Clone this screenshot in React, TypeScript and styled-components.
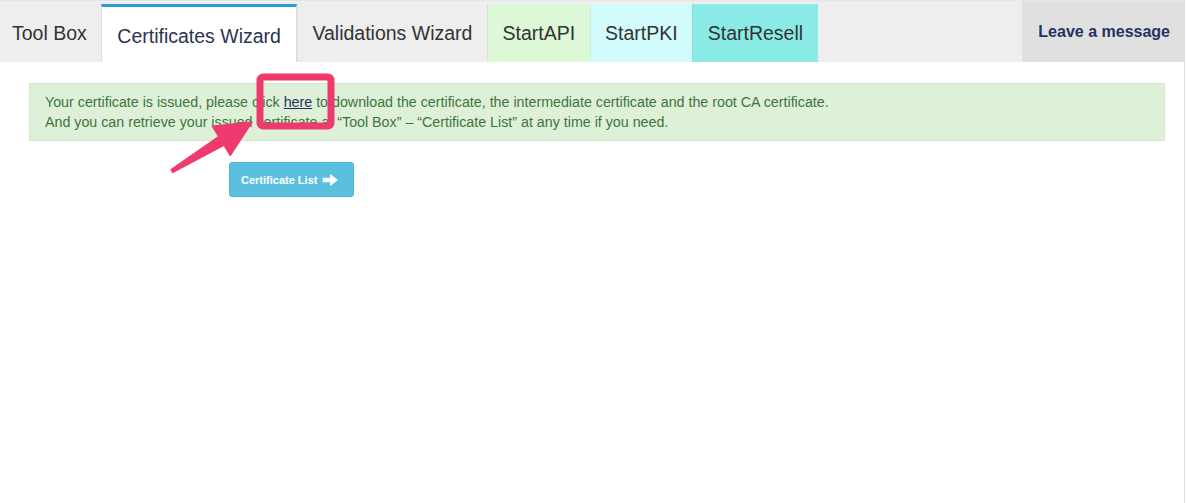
import React from "react";
import styled, { createGlobalStyle } from "styled-components";

const GlobalStyle = createGlobalStyle`
  html, body { margin: 0; padding: 0; background: #ffffff; }
  body { font-family: "Liberation Sans", Arial, sans-serif; }
  * { box-sizing: border-box; }
`;

const Page = styled.div`
  position: relative;
  width: 1185px;
  min-height: 503px;
  border-right: 1px solid #dcdcdc;
  background: #ffffff;
`;

const TabBar = styled.nav`
  display: flex;
  align-items: stretch;
  height: 62px;
  padding-top: 3px;
  background: #eeeeee;
  border-top: 1px solid #e6e6e6;
`;

type Variant = "plain" | "active" | "api" | "pki" | "resell";

const tabBg: Record<Variant, string> = {
  plain: "#eeeeee",
  active: "#ffffff",
  api: "#dcf8d6",
  pki: "#d2fbfb",
  resell: "#8aebe6",
};

const Tab = styled.div<{ $variant: Variant }>`
  display: flex;
  align-items: center;
  padding: ${(p) => (p.$variant === "active" ? "4px 15px 0" : "0 14.5px")};
  font-size: 19.5px;
  color: ${(p) => (p.$variant === "active" ? "#2b3452" : "#333333")};
  background: ${(p) => tabBg[p.$variant]};
  border-left: 1px solid
    ${(p) => (p.$variant === "active" ? "#dddddd" : "rgba(0,0,0,0.05)")};
  border-right: ${(p) => (p.$variant === "active" ? "1px solid #dddddd" : "0")};
  border-top: ${(p) => (p.$variant === "active" ? "3px solid #2b9cd4" : "0")};
  white-space: nowrap;
  cursor: pointer;
`;

const FirstTab = styled(Tab)`
  border-left: 0;
  padding-left: 12px;
`;

const Spacer = styled.div`
  flex: 1;
`;

const MessageButton = styled.div`
  display: flex;
  align-items: center;
  padding: 0 14px 0 16px;
  margin-top: -3px;
  background: #e0e0e0;
  color: #263163;
  font-weight: bold;
  font-size: 16px;
  white-space: nowrap;
`;

const Content = styled.main`
  padding: 21px 19px 0 29px;
`;

const Alert = styled.div`
  background: #dff0d8;
  border: 1px solid #d6e9c6;
  color: #3c763d;
  font-size: 14.25px;
  line-height: 20px;
  padding: 8px 15px;
  border-radius: 1px;
`;

const Link = styled.a`
  color: #27305a;
  text-decoration: underline;
  cursor: pointer;
`;

const ButtonRow = styled.div`
  display: flex;
  margin-top: 21px;
  padding-left: 200px;
`;

const InfoButton = styled.button`
  display: flex;
  align-items: center;
  gap: 5px;
  height: 35px;
  width: 125px;
  padding: 0 0 0 11px;
  background: #5bc0de;
  border: 1px solid #46b8da;
  border-radius: 3px;
  color: #ffffff;
  font-family: "Liberation Sans", Arial, sans-serif;
  font-size: 11px;
  font-weight: bold;
  cursor: pointer;
`;

const Overlay = styled.svg`
  position: absolute;
  left: 0;
  top: 0;
  pointer-events: none;
`;

const ArrowIcon = () => (
  <svg width="16" height="12" viewBox="0 0 16 12">
    <path d="M1 4.2 H8.5 V0.6 L15.4 6 L8.5 11.4 V7.8 H1 Z" fill="#ffffff" stroke="#ffffff" strokeWidth="0.8" strokeLinejoin="round" />
  </svg>
);

export default function App() {
  return (
    <>
      <GlobalStyle />
      <Page>
        <TabBar>
          <FirstTab $variant="plain">Tool Box</FirstTab>
          <Tab $variant="active">Certificates Wizard</Tab>
          <Tab $variant="plain">Validations Wizard</Tab>
          <Tab $variant="api">StartAPI</Tab>
          <Tab $variant="pki">StartPKI</Tab>
          <Tab $variant="resell">StartResell</Tab>
          <Spacer />
          <MessageButton>Leave a message</MessageButton>
        </TabBar>
        <Content>
          <Alert>
            Your certificate is issued, please click <Link>here</Link> to download the certificate, the intermediate certificate and the root CA certificate.
            <br />
            And you can retrieve your issued certificate at “Tool Box” – “Certificate List” at any time if you need.
          </Alert>
          <ButtonRow>
            <InfoButton>
              Certificate List <ArrowIcon />
            </InfoButton>
          </ButtonRow>
        </Content>
        <Overlay width="1187" height="503" viewBox="0 0 1187 503">
          <rect x="260" y="77" width="71" height="49" rx="3" fill="none" stroke="#ee3a6e" strokeWidth="7" />
          <polygon
            points="171.2,169.7 218.8,136.5 212.5,126.3 252,122 230.3,155.3 224,145 172.8,172.3"
            fill="#ee3a6e"
            stroke="#ee3a6e"
            strokeWidth="1.5"
            strokeLinejoin="round"
          />
        </Overlay>
      </Page>
    </>
  );
}
